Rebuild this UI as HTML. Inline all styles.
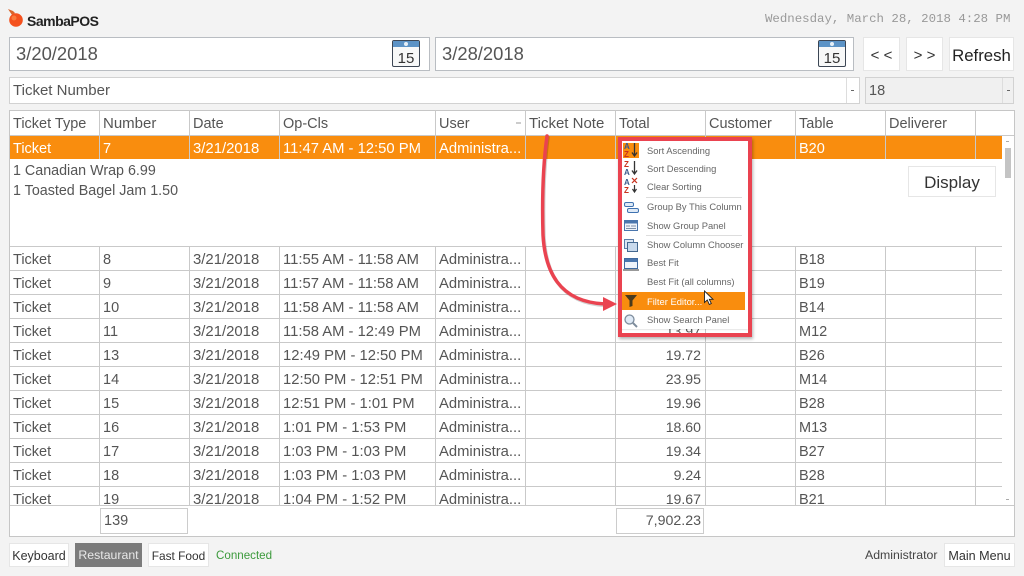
<!DOCTYPE html>
<html><head><meta charset="utf-8"><style>
html,body{margin:0;padding:0;width:1024px;height:576px;overflow:hidden;background:#f3f3f3;font-family:"Liberation Sans",sans-serif;color:#555}
*{box-sizing:border-box}
.a{position:absolute}
.t{position:absolute;white-space:nowrap;font-size:14.5px;line-height:20px;height:20px}
.l{position:absolute;background:#c9c9c9}
.box{position:absolute;background:#fff;border:1px solid #d2d2d2}
.r{position:absolute;left:0;width:1000px;height:24px;font-size:14.5px}
.r span{position:absolute;top:3px;line-height:20px;white-space:nowrap}
.c1{left:3px}.c2{left:93px}.c3{left:183px;font-size:14.9px}.c4{left:273px;font-size:14.8px}.c5{left:429px;font-size:14.8px}.r span.c6{right:309px;top:2px;text-align:right;font-size:14.1px}.c7{left:789px}
.m{position:absolute;left:647px;font-size:9.4px;line-height:12px;color:#666;white-space:nowrap}
.sep{position:absolute;left:646px;width:96px;height:1px;background:#ddd}
.btn{position:absolute;background:#fff;border:1px solid #e6e6e6;color:#333;text-align:center;white-space:nowrap}
</style></head><body>

<!-- logo -->
<svg class="a" style="left:6px;top:8px" width="20" height="20" viewBox="0 0 20 20"><path d="M2 1 L7 3 L9 5 L6 7 Z" fill="#d9652c"/><circle cx="10" cy="12" r="6.8" fill="#f4511e"/><circle cx="8" cy="10" r="2.5" fill="#fa7a3c"/></svg>
<div class="a" style="left:27px;top:11px;font-size:14px;line-height:20px;font-weight:bold;color:#222;letter-spacing:-.5px">SambaPOS</div>
<div class="a" style="left:765px;top:11px;font-family:'Liberation Mono',monospace;font-size:12.4px;line-height:16px;color:#999;white-space:nowrap">Wednesday, March 28, 2018 4:28 PM</div>

<!-- date boxes -->
<div class="box" style="left:9px;top:37px;width:421px;height:34px;border:1px solid #b9bdc2"></div>
<div class="t" style="left:16px;top:43px;font-size:18.4px;line-height:21px;height:21px;color:#555">3/20/2018</div>
<div class="box" style="left:435px;top:37px;width:419px;height:34px;border:1px solid #b9bdc2"></div>
<div class="t" style="left:442px;top:43px;font-size:18.4px;line-height:21px;height:21px;color:#555">3/28/2018</div>

<svg class="a" style="left:392px;top:40px" width="29" height="28" viewBox="0 0 29 28"><rect x=".5" y=".5" width="27" height="26" rx="1.5" fill="#f7f8f8" stroke="#3c4654"/><rect x="1" y="1" width="26" height="6" fill="#5c93c6"/><circle cx="14" cy="4" r="2" fill="#e6f0f8"/><text x="14" y="23" text-anchor="middle" font-family="Liberation Sans" font-size="15" fill="#333">15</text></svg>
<svg class="a" style="left:818px;top:40px" width="29" height="28" viewBox="0 0 29 28"><rect x=".5" y=".5" width="27" height="26" rx="1.5" fill="#f7f8f8" stroke="#3c4654"/><rect x="1" y="1" width="26" height="6" fill="#5c93c6"/><circle cx="14" cy="4" r="2" fill="#e6f0f8"/><text x="14" y="23" text-anchor="middle" font-family="Liberation Sans" font-size="15" fill="#333">15</text></svg>

<div class="btn" style="left:863px;top:37px;width:37px;height:34px;font-size:15px;line-height:35px">&lt; &lt;</div>
<div class="btn" style="left:906px;top:37px;width:37px;height:34px;font-size:15px;line-height:35px">&gt; &gt;</div>
<div class="btn" style="left:949px;top:37px;width:65px;height:34px;font-size:16.8px;line-height:35px;color:#222">Refresh</div>

<!-- selects -->
<div class="box" style="left:9px;top:77px;width:851px;height:27px"></div>
<div class="t" style="left:13px;top:81px;font-size:15px">Ticket Number</div>
<div class="l" style="left:846px;top:78px;width:1px;height:25px;background:#ddd"></div>
<div class="a" style="left:851px;top:90px;width:3px;height:1px;background:#666"></div>
<div class="box" style="left:865px;top:77px;width:149px;height:27px;background:#f0f0f0"></div>
<div class="t" style="left:869px;top:81px">18</div>
<div class="l" style="left:1002px;top:78px;width:1px;height:25px;background:#ddd"></div>
<div class="a" style="left:1007px;top:90px;width:3px;height:1px;background:#666"></div>

<!-- grid -->
<div class="box" style="left:9px;top:110px;width:1006px;height:427px;border-color:#c6c6c6"></div>

<!-- header -->
<div class="t" style="left:13px;top:114px">Ticket Type</div>
<div class="t" style="left:103px;top:114px;font-size:15px">Number</div>
<div class="t" style="left:193px;top:114px">Date</div>
<div class="t" style="left:283px;top:114px">Op-Cls</div>
<div class="t" style="left:439px;top:114px">User</div>
<div class="t" style="left:529px;top:114px;font-size:15px">Ticket Note</div>
<div class="t" style="left:619px;top:114px">Total</div>
<div class="t" style="left:709px;top:114px">Customer</div>
<div class="t" style="left:799px;top:114px">Table</div>
<div class="t" style="left:889px;top:114px">Deliverer</div>
<div class="a" style="left:516px;top:122px;width:5px;height:2px;background:#ccc"></div>

<!-- selected row -->
<div class="a" style="left:10px;top:136px;width:992px;height:23px;background:#f98d0e"></div>

<!-- column lines -->
<div class="l" style="left:99px;top:110px;width:1px;height:49px"></div>
<div class="l" style="left:189px;top:110px;width:1px;height:49px"></div>
<div class="l" style="left:279px;top:110px;width:1px;height:49px"></div>
<div class="l" style="left:435px;top:110px;width:1px;height:49px"></div>
<div class="l" style="left:525px;top:110px;width:1px;height:49px"></div>
<div class="l" style="left:615px;top:110px;width:1px;height:49px"></div>
<div class="l" style="left:705px;top:110px;width:1px;height:49px"></div>
<div class="l" style="left:795px;top:110px;width:1px;height:49px"></div>
<div class="l" style="left:885px;top:110px;width:1px;height:49px"></div>
<div class="l" style="left:975px;top:110px;width:1px;height:49px"></div>

<div class="l" style="left:99px;top:246px;width:1px;height:260px"></div>
<div class="l" style="left:189px;top:246px;width:1px;height:260px"></div>
<div class="l" style="left:279px;top:246px;width:1px;height:260px"></div>
<div class="l" style="left:435px;top:246px;width:1px;height:260px"></div>
<div class="l" style="left:525px;top:246px;width:1px;height:260px"></div>
<div class="l" style="left:615px;top:246px;width:1px;height:260px"></div>
<div class="l" style="left:705px;top:246px;width:1px;height:260px"></div>
<div class="l" style="left:795px;top:246px;width:1px;height:260px"></div>
<div class="l" style="left:885px;top:246px;width:1px;height:260px"></div>
<div class="l" style="left:975px;top:246px;width:1px;height:260px"></div>

<!-- row lines -->
<div class="l" style="left:10px;top:135px;width:1004px;height:1px"></div>
<div class="l" style="left:10px;top:246px;width:992px;height:1px"></div>
<div class="l" style="left:10px;top:270px;width:992px;height:1px"></div>
<div class="l" style="left:10px;top:294px;width:992px;height:1px"></div>
<div class="l" style="left:10px;top:318px;width:992px;height:1px"></div>
<div class="l" style="left:10px;top:342px;width:992px;height:1px"></div>
<div class="l" style="left:10px;top:366px;width:992px;height:1px"></div>
<div class="l" style="left:10px;top:390px;width:992px;height:1px"></div>
<div class="l" style="left:10px;top:414px;width:992px;height:1px"></div>
<div class="l" style="left:10px;top:438px;width:992px;height:1px"></div>
<div class="l" style="left:10px;top:462px;width:992px;height:1px"></div>
<div class="l" style="left:10px;top:486px;width:992px;height:1px"></div>
<div class="l" style="left:10px;top:505px;width:1004px;height:1px"></div>

<!-- selected text -->
<div class="t" style="left:13px;top:139px;color:#fff">Ticket</div>
<div class="t" style="left:103px;top:139px;color:#fff">7</div>
<div class="t" style="left:193px;top:139px;color:#fff;font-size:14.9px">3/21/2018</div>
<div class="t" style="left:283px;top:139px;color:#fff;font-size:14.8px">11:47 AM - 12:50 PM</div>
<div class="t" style="left:439px;top:139px;color:#fff;font-size:14.8px">Administra...</div>
<div class="t" style="left:799px;top:139px;color:#fff">B20</div>

<!-- detail -->
<div class="t" style="left:13px;top:161px;font-size:14.3px">1 Canadian Wrap 6.99</div>
<div class="t" style="left:13px;top:181px;font-size:14.3px">1 Toasted Bagel Jam 1.50</div>
<div class="btn" style="left:908px;top:166px;width:88px;height:31px;font-size:17px;line-height:31px;color:#333">Display</div>

<!-- rows -->
<div class="a" style="left:10px;top:247px;width:992px;height:258px;overflow:hidden">
<div class="r" style="top:0"><span class="c1">Ticket</span><span class="c2">8</span><span class="c3">3/21/2018</span><span class="c4">11:55 AM - 11:58 AM</span><span class="c5">Administra...</span><span class="c7">B18</span></div>
<div class="r" style="top:24px"><span class="c1">Ticket</span><span class="c2">9</span><span class="c3">3/21/2018</span><span class="c4">11:57 AM - 11:58 AM</span><span class="c5">Administra...</span><span class="c7">B19</span></div>
<div class="r" style="top:48px"><span class="c1">Ticket</span><span class="c2">10</span><span class="c3">3/21/2018</span><span class="c4">11:58 AM - 11:58 AM</span><span class="c5">Administra...</span><span class="c7">B14</span></div>
<div class="r" style="top:72px"><span class="c1">Ticket</span><span class="c2">11</span><span class="c3">3/21/2018</span><span class="c4">11:58 AM - 12:49 PM</span><span class="c5">Administra...</span><span class="c6">13.97</span><span class="c7">M12</span></div>
<div class="r" style="top:96px"><span class="c1">Ticket</span><span class="c2">13</span><span class="c3">3/21/2018</span><span class="c4">12:49 PM - 12:50 PM</span><span class="c5">Administra...</span><span class="c6">19.72</span><span class="c7">B26</span></div>
<div class="r" style="top:120px"><span class="c1">Ticket</span><span class="c2">14</span><span class="c3">3/21/2018</span><span class="c4">12:50 PM - 12:51 PM</span><span class="c5">Administra...</span><span class="c6">23.95</span><span class="c7">M14</span></div>
<div class="r" style="top:144px"><span class="c1">Ticket</span><span class="c2">15</span><span class="c3">3/21/2018</span><span class="c4">12:51 PM - 1:01 PM</span><span class="c5">Administra...</span><span class="c6">19.96</span><span class="c7">B28</span></div>
<div class="r" style="top:168px"><span class="c1">Ticket</span><span class="c2">16</span><span class="c3">3/21/2018</span><span class="c4">1:01 PM - 1:53 PM</span><span class="c5">Administra...</span><span class="c6">18.60</span><span class="c7">M13</span></div>
<div class="r" style="top:192px"><span class="c1">Ticket</span><span class="c2">17</span><span class="c3">3/21/2018</span><span class="c4">1:03 PM - 1:03 PM</span><span class="c5">Administra...</span><span class="c6">19.34</span><span class="c7">B27</span></div>
<div class="r" style="top:216px"><span class="c1">Ticket</span><span class="c2">18</span><span class="c3">3/21/2018</span><span class="c4">1:03 PM - 1:03 PM</span><span class="c5">Administra...</span><span class="c6">9.24</span><span class="c7">B28</span></div>
<div class="r" style="top:240px"><span class="c1">Ticket</span><span class="c2">19</span><span class="c3">3/21/2018</span><span class="c4">1:04 PM - 1:52 PM</span><span class="c5">Administra...</span><span class="c6">19.67</span><span class="c7">B21</span></div>
</div>

<!-- scrollbar -->
<div class="a" style="left:1002px;top:136px;width:12px;height:369px;background:#fff"></div>
<div class="a" style="left:1005px;top:148px;width:6px;height:30px;background:#c4c4c4"></div>
<div class="a" style="left:1006px;top:141px;width:3px;height:1px;background:#aaa"></div>
<div class="a" style="left:1006px;top:499px;width:3px;height:1px;background:#aaa"></div>

<!-- summary -->
<div class="box" style="left:100px;top:508px;width:88px;height:26px;border-color:#ccc"></div>
<div class="t" style="left:104px;top:511px">139</div>
<div class="box" style="left:616px;top:508px;width:88px;height:26px;border-color:#ccc"></div>
<div class="t" style="left:600px;top:511px;width:101px;text-align:right;font-size:14.2px">7,902.23</div>

<!-- footer -->
<div class="btn" style="left:9px;top:543px;width:60px;height:24px;font-size:12.5px;line-height:25px">Keyboard</div>
<div class="a" style="left:75px;top:543px;width:67px;height:24px;background:#7b7b7b;color:#e8e8e8;font-size:12.3px;line-height:25px;text-align:center">Restaurant</div>
<div class="btn" style="left:148px;top:543px;width:61px;height:24px;font-size:11.9px;line-height:25px">Fast Food</div>
<div class="a" style="left:216px;top:548px;font-size:11.6px;line-height:16px;color:#3c9a3c">Connected</div>
<div class="a" style="left:865px;top:547px;font-size:12.3px;line-height:16px;color:#444">Administrator</div>
<div class="btn" style="left:944px;top:543px;width:71px;height:24px;font-size:12.6px;line-height:25px">Main Menu</div>

<!-- menu -->
<div class="a" style="left:620px;top:139px;width:128px;height:190px;background:#fff;box-shadow:0 0 2px rgba(0,0,0,.25)"></div>
<div class="a" style="left:623px;top:143px;width:16px;height:15px;background:#f98d0e"></div>
<div class="a" style="left:620px;top:292px;width:125px;height:18px;background:#f98d0e"></div>

<div class="m" style="top:145px">Sort Ascending</div>
<div class="m" style="top:163px">Sort Descending</div>
<div class="m" style="top:181px">Clear Sorting</div>
<div class="sep" style="top:197px"></div>
<div class="m" style="top:201px">Group By This Column</div>
<div class="m" style="top:220px">Show Group Panel</div>
<div class="sep" style="top:235px"></div>
<div class="m" style="top:239px">Show Column Chooser</div>
<div class="m" style="top:257px">Best Fit</div>
<div class="m" style="top:276px">Best Fit (all columns)</div>
<div class="m" style="top:296px;color:#fff">Filter Editor...</div>
<div class="m" style="top:314px">Show Search Panel</div>

<!-- menu icons -->
<svg class="a" style="left:620px;top:140px" width="24" height="192" viewBox="0 0 24 192">
<g font-family="Liberation Sans" font-size="8" font-weight="bold">
<text x="4" y="9" fill="#3a5a8c">A</text><text x="4" y="17" fill="#c8321e">Z</text>
<path d="M14.500 3V15M12 12.500L14.500 16L17 12.500" stroke="#333" stroke-width="1.300" fill="none"/>
<text x="4" y="27" fill="#c8321e">Z</text><text x="4" y="35" fill="#3a5a8c">A</text>
<path d="M14.500 21V33M12 30.500L14.500 34L17 30.500" stroke="#333" stroke-width="1.300" fill="none"/>
<text x="4" y="45" fill="#3a5a8c">A</text><text x="4" y="53" fill="#c8321e">Z</text>
<path d="M12 38L17 43M17 38L12 43" stroke="#c8321e" stroke-width="1.200"/>
<path d="M14.500 45V51M12.500 49L14.500 52L16.500 49" stroke="#333" stroke-width="1.200" fill="none"/>
</g>
<rect x="4.500" y="62.500" width="9" height="4" rx="1.500" fill="#dfeaf6" stroke="#3f72b0"/>
<rect x="7.500" y="68.500" width="11" height="4" rx="1.500" fill="#dfeaf6" stroke="#3f72b0"/>
<rect x="4.500" y="80.500" width="13" height="10" fill="#eef3fa" stroke="#4a76ad"/>
<rect x="5" y="81" width="12" height="2.500" fill="#4a76ad"/>
<path d="M6 86h4M11 86h5M6 88.500h10" stroke="#7d8fa8"/>
<rect x="4.500" y="99.500" width="9" height="9" fill="#dbe6f3" stroke="#5b7da8"/>
<rect x="7.500" y="102.500" width="10" height="9" fill="#c8d9ec" stroke="#44688f"/>
<rect x="4.500" y="118.500" width="13" height="10" fill="#eef3fa" stroke="#3f6aa0"/>
<rect x="5" y="119" width="12" height="3" fill="#4a76ad"/>
<path d="M3 130h16" stroke="#333"/>
<path d="M5 155h12L12.500 160.500V166l-3 1V160.500Z" fill="#4a3a1c"/>
<circle cx="9.500" cy="179.500" r="4.500" fill="#dfeaf6" stroke="#7d8c9c" stroke-width="1.300"/>
<path d="M13 183l4 4" stroke="#7d8c9c" stroke-width="2"/>
</svg>

<!-- red annotation -->
<div class="a" style="left:618px;top:137px;width:134px;height:200px;border:4px solid #ea4350;box-shadow:1px 2px 3px rgba(0,0,0,.3)"></div>
<svg class="a" style="left:530px;top:130px" width="100" height="190" viewBox="0 0 100 190">
<path d="M17 6C13 35 12 70 13 105C15 140 28 172 75 174" fill="none" stroke="rgba(0,0,0,.18)" stroke-width="3.500" stroke-linecap="round" transform="translate(1,1.500)"/>
<path d="M17 6C13 35 12 70 13 105C15 140 28 172 75 174" fill="none" stroke="#ea4350" stroke-width="3.500" stroke-linecap="round"/>
<path d="M73 167L87 174L73 181Z" fill="#ea4350"/>
</svg>

<!-- cursor -->
<svg class="a" style="left:703px;top:290px" width="12" height="16" viewBox="0 0 12 16"><path d="M1.500 1V12.500L4.300 10L6.300 14.500L8.300 13.500L6.300 9.300H10Z" fill="#fff" stroke="#222" stroke-width=".9"/></svg>

</body></html>
